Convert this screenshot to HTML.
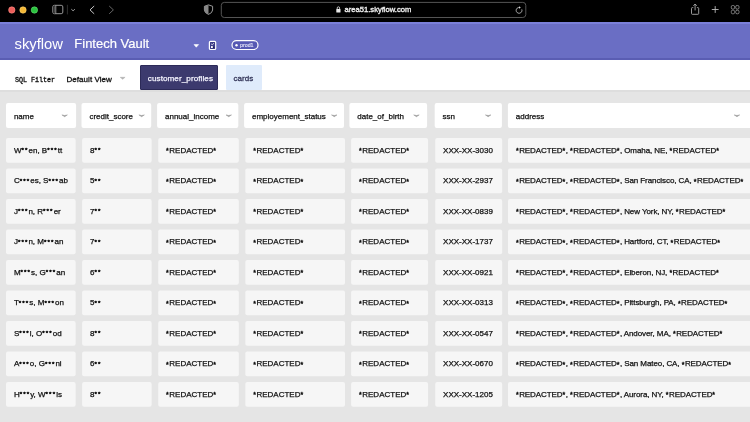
<!DOCTYPE html>
<html><head><meta charset="utf-8">
<style>
html,body{margin:0;padding:0;width:750px;height:422px;overflow:hidden;background:#e5e5e5;font-family:"Liberation Sans",sans-serif;}
.abs{position:absolute}
#chrome{position:absolute;left:0;top:0;width:750px;height:22px;background:#000}
#hdr{position:absolute;left:0;top:22px;width:750px;height:38px;background:#6a6ec4}
#hdr .hl{position:absolute;left:0;top:0;width:750px;height:2px;background:#7b80d9}
#hdr .sh{position:absolute;left:0;bottom:0;width:750px;height:2px;background:#5a5db3}
#tb{position:absolute;left:0;top:60px;width:750px;height:30px;background:#fff}
#gray{position:absolute;left:0;top:90px;width:750px;height:332px;background:#e5e5e5}
#gray .sh{position:absolute;left:0;top:0;width:750px;height:2px;background:#dedede}
.t{position:absolute;font-size:8px;color:#111;-webkit-text-stroke:0.25px #111;white-space:nowrap}
.hc{padding-top:1px}
.nm{letter-spacing:0px}
.nm .a{font-size:6.2px;letter-spacing:1.1px;-webkit-text-stroke:0.55px #111;top:-0.5px}
.a{font-size:7px;letter-spacing:0.5px;-webkit-text-stroke:0.4px #111;position:relative;top:0.4px}
.ad{letter-spacing:-0.08px}
.dc{padding-top:0.9px}
</style></head><body><div id="wrap" style="position:absolute;left:0;top:0;width:750px;height:422px;will-change:transform">
<div id="chrome">
 <svg class="abs" style="left:0;top:0" width="750" height="22" viewBox="0 0 750 22">
  <circle cx="11.8" cy="10" r="3.2" fill="#ec5f5a" stroke="#ff8c84" stroke-width="0.6"/>
  <circle cx="23" cy="10" r="3.2" fill="#f4b836" stroke="#ffd56e" stroke-width="0.6"/>
  <circle cx="34.4" cy="10" r="3.2" fill="#2bc23f" stroke="#62e070" stroke-width="0.6"/>
  <rect x="52.8" y="5.3" width="10" height="8.4" rx="1.6" fill="none" stroke="#a8a8a8" stroke-width="0.9"/>
  <rect x="53.3" y="5.8" width="2.2" height="7.4" fill="#2e2e2e"/><line x1="54.4" y1="6.6" x2="54.4" y2="12.4" stroke="#5a5a5a" stroke-width="0.7"/>
  <line x1="55.8" y1="5.3" x2="55.8" y2="13.7" stroke="#a8a8a8" stroke-width="0.8"/>
  <line x1="67.4" y1="4.8" x2="67.4" y2="14.4" stroke="#3a3a3a" stroke-width="0.8"/>
  <path d="M71.3 9.2 L73.1 10.8 L74.9 9.2" fill="none" stroke="#aaa" stroke-width="0.9"/>
  <path d="M94.2 6 L90 9.9 L94.2 13.8" fill="none" stroke="#c8c8c8" stroke-width="1"/>
  <path d="M109.2 6 L113.4 9.9 L109.2 13.8" fill="none" stroke="#666" stroke-width="1"/>
  <path d="M208.5 4.9 L212.6 6.3 L212.6 10 Q212.4 13 208.5 14.4 Q204.6 13 204.4 10 L204.4 6.3 Z" fill="none" stroke="#aaa" stroke-width="0.9"/>
  <path d="M208.5 4.9 L204.4 6.3 L204.4 10 Q204.6 13 208.5 14.4 Z" fill="#888"/>
  <rect x="221.3" y="2.4" width="304.5" height="15.1" rx="3" fill="none" stroke="#5e5e5e" stroke-width="0.9"/>
  <rect x="336.3" y="9" width="4.2" height="3.6" rx="0.5" fill="#e8e8e8"/>
  <path d="M337.2 9.2 V8 A1.2 1.2 0 0 1 339.6 8 V9.2" fill="none" stroke="#e8e8e8" stroke-width="0.8"/>
  <path d="M521.8 9.4 A2.9 2.9 0 1 1 519.5 7.5" fill="none" stroke="#bbb" stroke-width="0.9"/>
  <path d="M519 6.2 L520.8 7.4 L519 8.8 Z" fill="#ddd"/>
  <path d="M693.3 7.6 H692.3 A0.8 0.8 0 0 0 691.5 8.4 V13.5 A0.8 0.8 0 0 0 692.3 14.3 H697.9 A0.8 0.8 0 0 0 698.7 13.5 V8.4 A0.8 0.8 0 0 0 697.9 7.6 H696.9" fill="none" stroke="#aaa" stroke-width="0.9"/>
  <line x1="695.1" y1="4.2" x2="695.1" y2="10.4" stroke="#aaa" stroke-width="0.9"/>
  <path d="M693.4 5.8 L695.1 4 L696.8 5.8" fill="none" stroke="#aaa" stroke-width="0.9"/>
  <line x1="711.8" y1="9.5" x2="718.6" y2="9.5" stroke="#bbb" stroke-width="0.9"/>
  <line x1="715.2" y1="6.1" x2="715.2" y2="12.9" stroke="#bbb" stroke-width="0.9"/>
  <rect x="731.3" y="5.5" width="3.3" height="3.6" rx="1.3" fill="none" stroke="#999" stroke-width="0.8"/>
  <rect x="735.7" y="5.5" width="3.3" height="3.6" rx="1.3" fill="none" stroke="#999" stroke-width="0.8"/>
  <rect x="731.3" y="10.2" width="3.3" height="3.6" rx="1.3" fill="none" stroke="#999" stroke-width="0.8"/>
  <rect x="735.7" y="10.2" width="3.3" height="3.6" rx="1.3" fill="none" stroke="#999" stroke-width="0.8"/>
 </svg>
 <div class="abs" style="left:344.6px;top:4px;font-size:7.6px;line-height:12px;color:#eee;-webkit-text-stroke:0.35px #eee;white-space:nowrap">area51.skyflow.com</div>
</div>
<div id="hdr"><div class="hl"></div><div class="sh"></div>
 <div class="abs" style="left:14.5px;top:11.6px;font-size:14.8px;line-height:20px;color:#fff;white-space:nowrap">skyflow</div>
 <div class="abs" style="left:74.3px;top:13.5px;font-size:13px;line-height:16px;color:#fff;-webkit-text-stroke:0.2px #fff;white-space:nowrap">Fintech Vault</div>
 <svg class="abs" style="left:0;top:0" width="750" height="38" viewBox="0 22 750 38">
  <path d="M194 44.6 L198.6 44.6 L196.3 47.2 Z" fill="#fff" stroke="#fff" stroke-width="0.6" stroke-linejoin="round"/>
  <rect x="209.4" y="41.4" width="6.3" height="8.1" rx="1" fill="#3a3a86" stroke="#fff" stroke-width="1.2"/>
  <path d="M211.1 43.9 L212.2 44.7 L214 43.3" fill="none" stroke="#fff" stroke-width="0.75"/>
  <rect x="211" y="46.1" width="1.8" height="1.9" fill="#fff"/><rect x="213" y="46.8" width="1.3" height="1.3" fill="#1e1e55"/>
  <rect x="232" y="40.6" width="26" height="8.9" rx="4.45" fill="#5659b4" stroke="#fff" stroke-width="1.2"/>
  <circle cx="236.5" cy="45.2" r="1.2" fill="#fff"/>
 </svg>
 <div class="abs" style="left:240px;top:19.1px;font-size:5.3px;line-height:8px;color:#dcdcf5;-webkit-text-stroke:0.2px #dcdcf5;white-space:nowrap">prod1</div>
</div>
<div id="tb">
 <div class="abs" style="left:15px;top:15px;font-family:'Liberation Mono',monospace;font-size:6.7px;line-height:10px;color:#111;-webkit-text-stroke:0.3px #111;white-space:nowrap">SQL Filter</div>
 <div class="abs" style="left:66.5px;top:14.8px;font-size:8px;letter-spacing:0.05px;line-height:10px;color:#111;-webkit-text-stroke:0.3px #111;white-space:nowrap">Default View</div>
 <svg class="abs" style="left:119px;top:16px" width="8" height="5" viewBox="0 0 8 5"><path d="M1.2 1.3 L6.1 1.3 L3.65 3.3 Z" fill="#b0b0b0" stroke="#b0b0b0" stroke-width="0.5" stroke-linejoin="round"/></svg>
 <div class="abs" style="left:140px;top:5.2px;width:77.8px;height:24.8px;background:#3c3a6e;border:1px solid #2c2a58;border-radius:1px;box-sizing:border-box"></div>
 <div class="abs" style="left:147.8px;top:13.5px;font-size:8.1px;letter-spacing:0.08px;line-height:10px;color:#f4f4ff;-webkit-text-stroke:0.25px #f4f4ff;white-space:nowrap">customer_profiles</div>
 <div class="abs" style="left:226px;top:5.4px;width:35.5px;height:24.6px;background:#dfebfb;border-radius:1px"></div>
 <div class="abs" style="left:233.6px;top:13.7px;font-size:8px;line-height:10px;color:#35375a;-webkit-text-stroke:0.3px #35375a;white-space:nowrap">cards</div>
</div>
<div id="gray"><div class="sh"></div></div>
<svg class="abs" style="left:0;top:0" width="750" height="422" viewBox="0 0 750 422"><rect x="6" y="103" width="70.10" height="25" rx="2" fill="#fff"/><path transform="translate(61.20,113.40)" d="M0.7 1.5 L3.45 2.1 L6.2 1.5 L3.45 3.3 Z" fill="#939393" stroke="#999"  stroke-width="0.5" stroke-linejoin="round"/><rect x="81.5" y="103" width="69.70" height="25" rx="2" fill="#fff"/><path transform="translate(138.20,113.40)" d="M0.7 1.5 L3.45 2.1 L6.2 1.5 L3.45 3.3 Z" fill="#939393" stroke="#999"  stroke-width="0.5" stroke-linejoin="round"/><rect x="157.1" y="103" width="81.20" height="25" rx="2" fill="#fff"/><path transform="translate(225.30,113.40)" d="M0.7 1.5 L3.45 2.1 L6.2 1.5 L3.45 3.3 Z" fill="#939393" stroke="#999"  stroke-width="0.5" stroke-linejoin="round"/><rect x="244.1" y="103" width="99.90" height="25" rx="2" fill="#fff"/><path transform="translate(330.80,113.40)" d="M0.7 1.5 L3.45 2.1 L6.2 1.5 L3.45 3.3 Z" fill="#939393" stroke="#999"  stroke-width="0.5" stroke-linejoin="round"/><rect x="349.4" y="103" width="77.70" height="25" rx="2" fill="#fff"/><path transform="translate(413.00,113.40)" d="M0.7 1.5 L3.45 2.1 L6.2 1.5 L3.45 3.3 Z" fill="#939393" stroke="#999"  stroke-width="0.5" stroke-linejoin="round"/><rect x="434.7" y="103" width="67.20" height="25" rx="2" fill="#fff"/><path transform="translate(484.70,113.40)" d="M0.7 1.5 L3.45 2.1 L6.2 1.5 L3.45 3.3 Z" fill="#939393" stroke="#999"  stroke-width="0.5" stroke-linejoin="round"/><rect x="507.9" y="103" width="252.10" height="25" rx="2" fill="#fff"/><path transform="translate(733.50,113.40)" d="M0.7 1.5 L3.45 2.1 L6.2 1.5 L3.45 3.3 Z" fill="#939393" stroke="#999"  stroke-width="0.5" stroke-linejoin="round"/><rect x="6" y="138.0" width="69.60" height="24.8" rx="2" fill="#f6f6f6"/><rect x="82.1" y="138.0" width="69.50" height="24.8" rx="2" fill="#f6f6f6"/><rect x="158.2" y="138.0" width="80.60" height="24.8" rx="2" fill="#f6f6f6"/><rect x="245.3" y="138.0" width="99.70" height="24.8" rx="2" fill="#f6f6f6"/><rect x="351.1" y="138.0" width="77.00" height="24.8" rx="2" fill="#f6f6f6"/><rect x="435.2" y="138.0" width="67.00" height="24.8" rx="2" fill="#f6f6f6"/><rect x="508" y="138.0" width="252.00" height="24.8" rx="2" fill="#f6f6f6"/><rect x="6" y="168.5" width="69.60" height="24.8" rx="2" fill="#f6f6f6"/><rect x="82.1" y="168.5" width="69.50" height="24.8" rx="2" fill="#f6f6f6"/><rect x="158.2" y="168.5" width="80.60" height="24.8" rx="2" fill="#f6f6f6"/><rect x="245.3" y="168.5" width="99.70" height="24.8" rx="2" fill="#f6f6f6"/><rect x="351.1" y="168.5" width="77.00" height="24.8" rx="2" fill="#f6f6f6"/><rect x="435.2" y="168.5" width="67.00" height="24.8" rx="2" fill="#f6f6f6"/><rect x="508" y="168.5" width="252.00" height="24.8" rx="2" fill="#f6f6f6"/><rect x="6" y="199.0" width="69.60" height="24.8" rx="2" fill="#f6f6f6"/><rect x="82.1" y="199.0" width="69.50" height="24.8" rx="2" fill="#f6f6f6"/><rect x="158.2" y="199.0" width="80.60" height="24.8" rx="2" fill="#f6f6f6"/><rect x="245.3" y="199.0" width="99.70" height="24.8" rx="2" fill="#f6f6f6"/><rect x="351.1" y="199.0" width="77.00" height="24.8" rx="2" fill="#f6f6f6"/><rect x="435.2" y="199.0" width="67.00" height="24.8" rx="2" fill="#f6f6f6"/><rect x="508" y="199.0" width="252.00" height="24.8" rx="2" fill="#f6f6f6"/><rect x="6" y="229.5" width="69.60" height="24.8" rx="2" fill="#f6f6f6"/><rect x="82.1" y="229.5" width="69.50" height="24.8" rx="2" fill="#f6f6f6"/><rect x="158.2" y="229.5" width="80.60" height="24.8" rx="2" fill="#f6f6f6"/><rect x="245.3" y="229.5" width="99.70" height="24.8" rx="2" fill="#f6f6f6"/><rect x="351.1" y="229.5" width="77.00" height="24.8" rx="2" fill="#f6f6f6"/><rect x="435.2" y="229.5" width="67.00" height="24.8" rx="2" fill="#f6f6f6"/><rect x="508" y="229.5" width="252.00" height="24.8" rx="2" fill="#f6f6f6"/><rect x="6" y="260.0" width="69.60" height="24.8" rx="2" fill="#f6f6f6"/><rect x="82.1" y="260.0" width="69.50" height="24.8" rx="2" fill="#f6f6f6"/><rect x="158.2" y="260.0" width="80.60" height="24.8" rx="2" fill="#f6f6f6"/><rect x="245.3" y="260.0" width="99.70" height="24.8" rx="2" fill="#f6f6f6"/><rect x="351.1" y="260.0" width="77.00" height="24.8" rx="2" fill="#f6f6f6"/><rect x="435.2" y="260.0" width="67.00" height="24.8" rx="2" fill="#f6f6f6"/><rect x="508" y="260.0" width="252.00" height="24.8" rx="2" fill="#f6f6f6"/><rect x="6" y="290.5" width="69.60" height="24.8" rx="2" fill="#f6f6f6"/><rect x="82.1" y="290.5" width="69.50" height="24.8" rx="2" fill="#f6f6f6"/><rect x="158.2" y="290.5" width="80.60" height="24.8" rx="2" fill="#f6f6f6"/><rect x="245.3" y="290.5" width="99.70" height="24.8" rx="2" fill="#f6f6f6"/><rect x="351.1" y="290.5" width="77.00" height="24.8" rx="2" fill="#f6f6f6"/><rect x="435.2" y="290.5" width="67.00" height="24.8" rx="2" fill="#f6f6f6"/><rect x="508" y="290.5" width="252.00" height="24.8" rx="2" fill="#f6f6f6"/><rect x="6" y="321.0" width="69.60" height="24.8" rx="2" fill="#f6f6f6"/><rect x="82.1" y="321.0" width="69.50" height="24.8" rx="2" fill="#f6f6f6"/><rect x="158.2" y="321.0" width="80.60" height="24.8" rx="2" fill="#f6f6f6"/><rect x="245.3" y="321.0" width="99.70" height="24.8" rx="2" fill="#f6f6f6"/><rect x="351.1" y="321.0" width="77.00" height="24.8" rx="2" fill="#f6f6f6"/><rect x="435.2" y="321.0" width="67.00" height="24.8" rx="2" fill="#f6f6f6"/><rect x="508" y="321.0" width="252.00" height="24.8" rx="2" fill="#f6f6f6"/><rect x="6" y="351.5" width="69.60" height="24.8" rx="2" fill="#f6f6f6"/><rect x="82.1" y="351.5" width="69.50" height="24.8" rx="2" fill="#f6f6f6"/><rect x="158.2" y="351.5" width="80.60" height="24.8" rx="2" fill="#f6f6f6"/><rect x="245.3" y="351.5" width="99.70" height="24.8" rx="2" fill="#f6f6f6"/><rect x="351.1" y="351.5" width="77.00" height="24.8" rx="2" fill="#f6f6f6"/><rect x="435.2" y="351.5" width="67.00" height="24.8" rx="2" fill="#f6f6f6"/><rect x="508" y="351.5" width="252.00" height="24.8" rx="2" fill="#f6f6f6"/><rect x="6" y="382.0" width="69.60" height="24.8" rx="2" fill="#f6f6f6"/><rect x="82.1" y="382.0" width="69.50" height="24.8" rx="2" fill="#f6f6f6"/><rect x="158.2" y="382.0" width="80.60" height="24.8" rx="2" fill="#f6f6f6"/><rect x="245.3" y="382.0" width="99.70" height="24.8" rx="2" fill="#f6f6f6"/><rect x="351.1" y="382.0" width="77.00" height="24.8" rx="2" fill="#f6f6f6"/><rect x="435.2" y="382.0" width="67.00" height="24.8" rx="2" fill="#f6f6f6"/><rect x="508" y="382.0" width="252.00" height="24.8" rx="2" fill="#f6f6f6"/></svg><div class="t hc" style="left:13.90px;top:103.00px;height:25px;line-height:25px">name</div>
<div class="t hc" style="left:89.40px;top:103.00px;height:25px;line-height:25px">credit_score</div>
<div class="t hc" style="left:165.00px;top:103.00px;height:25px;line-height:25px">annual_income</div>
<div class="t hc" style="left:252.00px;top:103.00px;height:25px;line-height:25px">employement_status</div>
<div class="t hc" style="left:357.30px;top:103.00px;height:25px;line-height:25px">date_of_birth</div>
<div class="t hc" style="left:442.60px;top:103.00px;height:25px;line-height:25px">ssn</div>
<div class="t hc" style="left:515.80px;top:103.00px;height:25px;line-height:25px">address</div>
<div class="t dc nm" style="left:13.90px;top:138.00px;height:24.8px;line-height:24.8px">W<span class="a">**</span>en, B<span class="a">***</span>tt</div>
<div class="t dc nm" style="left:90.00px;top:138.00px;height:24.8px;line-height:24.8px">8<span class="a">**</span></div>
<div class="t dc" style="left:166.10px;top:138.00px;height:24.8px;line-height:24.8px"><span class="a">*</span>REDACTED<span class="a">*</span></div>
<div class="t dc" style="left:253.20px;top:138.00px;height:24.8px;line-height:24.8px"><span class="a">*</span>REDACTED<span class="a">*</span></div>
<div class="t dc" style="left:359.00px;top:138.00px;height:24.8px;line-height:24.8px"><span class="a">*</span>REDACTED<span class="a">*</span></div>
<div class="t dc" style="left:443.10px;top:138.00px;height:24.8px;line-height:24.8px">XXX-XX-3030</div>
<div class="t dc ad" style="left:515.90px;top:138.00px;height:24.8px;line-height:24.8px"><span class="a">*</span>REDACTED<span class="a">*</span>, <span class="a">*</span>REDACTED<span class="a">*</span>, Omaha, NE, <span class="a">*</span>REDACTED<span class="a">*</span></div>
<div class="t dc nm" style="left:13.90px;top:168.50px;height:24.8px;line-height:24.8px">C<span class="a">***</span>es, S<span class="a">***</span>ab</div>
<div class="t dc nm" style="left:90.00px;top:168.50px;height:24.8px;line-height:24.8px">5<span class="a">**</span></div>
<div class="t dc" style="left:166.10px;top:168.50px;height:24.8px;line-height:24.8px"><span class="a">*</span>REDACTED<span class="a">*</span></div>
<div class="t dc" style="left:253.20px;top:168.50px;height:24.8px;line-height:24.8px"><span class="a">*</span>REDACTED<span class="a">*</span></div>
<div class="t dc" style="left:359.00px;top:168.50px;height:24.8px;line-height:24.8px"><span class="a">*</span>REDACTED<span class="a">*</span></div>
<div class="t dc" style="left:443.10px;top:168.50px;height:24.8px;line-height:24.8px">XXX-XX-2937</div>
<div class="t dc ad" style="left:515.90px;top:168.50px;height:24.8px;line-height:24.8px"><span class="a">*</span>REDACTED<span class="a">*</span>, <span class="a">*</span>REDACTED<span class="a">*</span>, San Francisco, CA, <span class="a">*</span>REDACTED<span class="a">*</span></div>
<div class="t dc nm" style="left:13.90px;top:199.00px;height:24.8px;line-height:24.8px">J<span class="a">***</span>n, R<span class="a">***</span>er</div>
<div class="t dc nm" style="left:90.00px;top:199.00px;height:24.8px;line-height:24.8px">7<span class="a">**</span></div>
<div class="t dc" style="left:166.10px;top:199.00px;height:24.8px;line-height:24.8px"><span class="a">*</span>REDACTED<span class="a">*</span></div>
<div class="t dc" style="left:253.20px;top:199.00px;height:24.8px;line-height:24.8px"><span class="a">*</span>REDACTED<span class="a">*</span></div>
<div class="t dc" style="left:359.00px;top:199.00px;height:24.8px;line-height:24.8px"><span class="a">*</span>REDACTED<span class="a">*</span></div>
<div class="t dc" style="left:443.10px;top:199.00px;height:24.8px;line-height:24.8px">XXX-XX-0839</div>
<div class="t dc ad" style="left:515.90px;top:199.00px;height:24.8px;line-height:24.8px"><span class="a">*</span>REDACTED<span class="a">*</span>, <span class="a">*</span>REDACTED<span class="a">*</span>, New York, NY, <span class="a">*</span>REDACTED<span class="a">*</span></div>
<div class="t dc nm" style="left:13.90px;top:229.50px;height:24.8px;line-height:24.8px">J<span class="a">***</span>n, M<span class="a">***</span>an</div>
<div class="t dc nm" style="left:90.00px;top:229.50px;height:24.8px;line-height:24.8px">7<span class="a">**</span></div>
<div class="t dc" style="left:166.10px;top:229.50px;height:24.8px;line-height:24.8px"><span class="a">*</span>REDACTED<span class="a">*</span></div>
<div class="t dc" style="left:253.20px;top:229.50px;height:24.8px;line-height:24.8px"><span class="a">*</span>REDACTED<span class="a">*</span></div>
<div class="t dc" style="left:359.00px;top:229.50px;height:24.8px;line-height:24.8px"><span class="a">*</span>REDACTED<span class="a">*</span></div>
<div class="t dc" style="left:443.10px;top:229.50px;height:24.8px;line-height:24.8px">XXX-XX-1737</div>
<div class="t dc ad" style="left:515.90px;top:229.50px;height:24.8px;line-height:24.8px"><span class="a">*</span>REDACTED<span class="a">*</span>, <span class="a">*</span>REDACTED<span class="a">*</span>, Hartford, CT, <span class="a">*</span>REDACTED<span class="a">*</span></div>
<div class="t dc nm" style="left:13.90px;top:260.00px;height:24.8px;line-height:24.8px">M<span class="a">***</span>s, G<span class="a">***</span>an</div>
<div class="t dc nm" style="left:90.00px;top:260.00px;height:24.8px;line-height:24.8px">6<span class="a">**</span></div>
<div class="t dc" style="left:166.10px;top:260.00px;height:24.8px;line-height:24.8px"><span class="a">*</span>REDACTED<span class="a">*</span></div>
<div class="t dc" style="left:253.20px;top:260.00px;height:24.8px;line-height:24.8px"><span class="a">*</span>REDACTED<span class="a">*</span></div>
<div class="t dc" style="left:359.00px;top:260.00px;height:24.8px;line-height:24.8px"><span class="a">*</span>REDACTED<span class="a">*</span></div>
<div class="t dc" style="left:443.10px;top:260.00px;height:24.8px;line-height:24.8px">XXX-XX-0921</div>
<div class="t dc ad" style="left:515.90px;top:260.00px;height:24.8px;line-height:24.8px"><span class="a">*</span>REDACTED<span class="a">*</span>, <span class="a">*</span>REDACTED<span class="a">*</span>, Elberon, NJ, <span class="a">*</span>REDACTED<span class="a">*</span></div>
<div class="t dc nm" style="left:13.90px;top:290.50px;height:24.8px;line-height:24.8px">T<span class="a">***</span>s, M<span class="a">***</span>on</div>
<div class="t dc nm" style="left:90.00px;top:290.50px;height:24.8px;line-height:24.8px">5<span class="a">**</span></div>
<div class="t dc" style="left:166.10px;top:290.50px;height:24.8px;line-height:24.8px"><span class="a">*</span>REDACTED<span class="a">*</span></div>
<div class="t dc" style="left:253.20px;top:290.50px;height:24.8px;line-height:24.8px"><span class="a">*</span>REDACTED<span class="a">*</span></div>
<div class="t dc" style="left:359.00px;top:290.50px;height:24.8px;line-height:24.8px"><span class="a">*</span>REDACTED<span class="a">*</span></div>
<div class="t dc" style="left:443.10px;top:290.50px;height:24.8px;line-height:24.8px">XXX-XX-0313</div>
<div class="t dc ad" style="left:515.90px;top:290.50px;height:24.8px;line-height:24.8px"><span class="a">*</span>REDACTED<span class="a">*</span>, <span class="a">*</span>REDACTED<span class="a">*</span>, Pittsburgh, PA, <span class="a">*</span>REDACTED<span class="a">*</span></div>
<div class="t dc nm" style="left:13.90px;top:321.00px;height:24.8px;line-height:24.8px">S<span class="a">***</span>l, O<span class="a">***</span>od</div>
<div class="t dc nm" style="left:90.00px;top:321.00px;height:24.8px;line-height:24.8px">8<span class="a">**</span></div>
<div class="t dc" style="left:166.10px;top:321.00px;height:24.8px;line-height:24.8px"><span class="a">*</span>REDACTED<span class="a">*</span></div>
<div class="t dc" style="left:253.20px;top:321.00px;height:24.8px;line-height:24.8px"><span class="a">*</span>REDACTED<span class="a">*</span></div>
<div class="t dc" style="left:359.00px;top:321.00px;height:24.8px;line-height:24.8px"><span class="a">*</span>REDACTED<span class="a">*</span></div>
<div class="t dc" style="left:443.10px;top:321.00px;height:24.8px;line-height:24.8px">XXX-XX-0547</div>
<div class="t dc ad" style="left:515.90px;top:321.00px;height:24.8px;line-height:24.8px"><span class="a">*</span>REDACTED<span class="a">*</span>, <span class="a">*</span>REDACTED<span class="a">*</span>, Andover, MA, <span class="a">*</span>REDACTED<span class="a">*</span></div>
<div class="t dc nm" style="left:13.90px;top:351.50px;height:24.8px;line-height:24.8px">A<span class="a">***</span>o, G<span class="a">***</span>ni</div>
<div class="t dc nm" style="left:90.00px;top:351.50px;height:24.8px;line-height:24.8px">6<span class="a">**</span></div>
<div class="t dc" style="left:166.10px;top:351.50px;height:24.8px;line-height:24.8px"><span class="a">*</span>REDACTED<span class="a">*</span></div>
<div class="t dc" style="left:253.20px;top:351.50px;height:24.8px;line-height:24.8px"><span class="a">*</span>REDACTED<span class="a">*</span></div>
<div class="t dc" style="left:359.00px;top:351.50px;height:24.8px;line-height:24.8px"><span class="a">*</span>REDACTED<span class="a">*</span></div>
<div class="t dc" style="left:443.10px;top:351.50px;height:24.8px;line-height:24.8px">XXX-XX-0670</div>
<div class="t dc ad" style="left:515.90px;top:351.50px;height:24.8px;line-height:24.8px"><span class="a">*</span>REDACTED<span class="a">*</span>, <span class="a">*</span>REDACTED<span class="a">*</span>, San Mateo, CA, <span class="a">*</span>REDACTED<span class="a">*</span></div>
<div class="t dc nm" style="left:13.90px;top:382.00px;height:24.8px;line-height:24.8px">H<span class="a">***</span>y, W<span class="a">***</span>ls</div>
<div class="t dc nm" style="left:90.00px;top:382.00px;height:24.8px;line-height:24.8px">8<span class="a">**</span></div>
<div class="t dc" style="left:166.10px;top:382.00px;height:24.8px;line-height:24.8px"><span class="a">*</span>REDACTED<span class="a">*</span></div>
<div class="t dc" style="left:253.20px;top:382.00px;height:24.8px;line-height:24.8px"><span class="a">*</span>REDACTED<span class="a">*</span></div>
<div class="t dc" style="left:359.00px;top:382.00px;height:24.8px;line-height:24.8px"><span class="a">*</span>REDACTED<span class="a">*</span></div>
<div class="t dc" style="left:443.10px;top:382.00px;height:24.8px;line-height:24.8px">XXX-XX-1205</div>
<div class="t dc ad" style="left:515.90px;top:382.00px;height:24.8px;line-height:24.8px"><span class="a">*</span>REDACTED<span class="a">*</span>, <span class="a">*</span>REDACTED<span class="a">*</span>, Aurora, NY, <span class="a">*</span>REDACTED<span class="a">*</span></div>
</div></body></html>
